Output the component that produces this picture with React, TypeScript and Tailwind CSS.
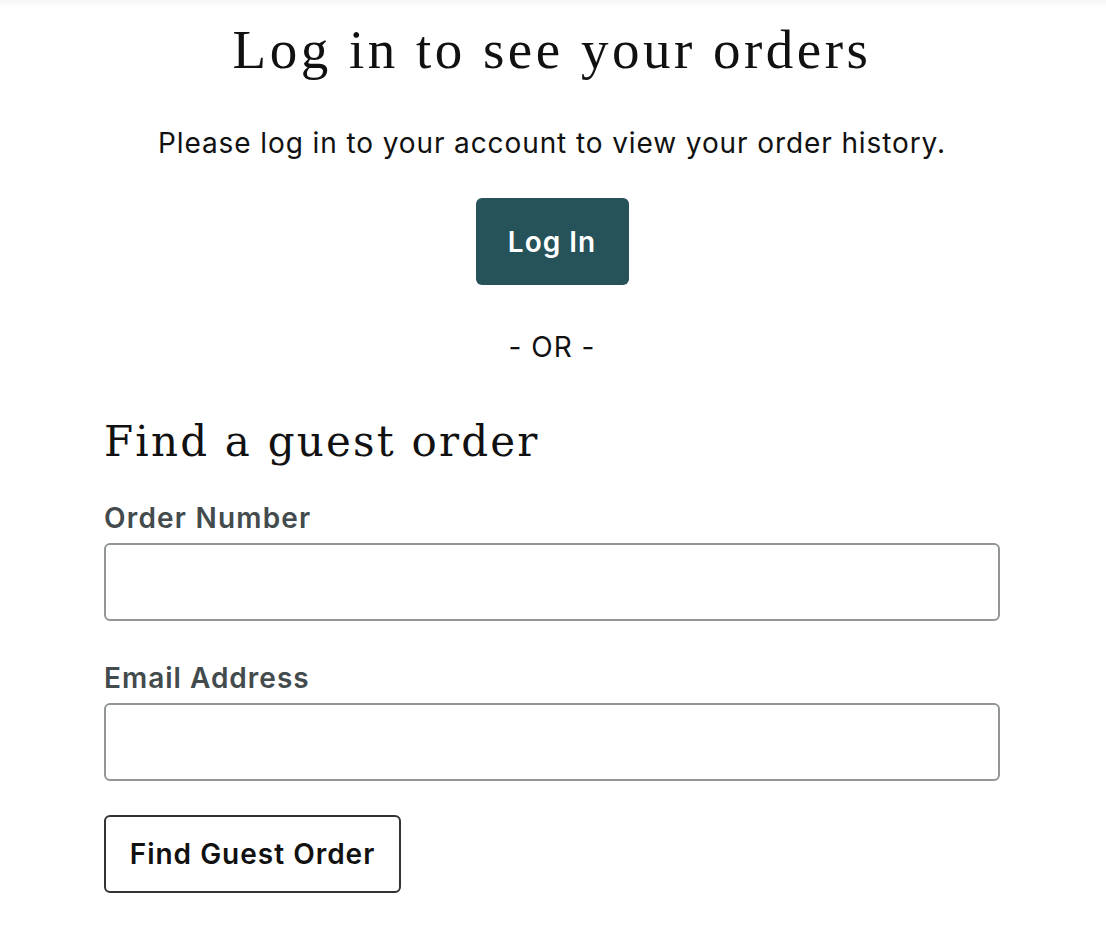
import React from "react";

export default function App() {
  const sans = { fontFamily: "Inter, 'Noto Sans', sans-serif" };
  return (
    <div className="min-h-[946px] w-full bg-white relative" style={sans}>
      <div className="absolute inset-x-0 top-0 h-[8px] bg-gradient-to-b from-[#f5f5f5] to-white" />
      <div className="ml-[104px] w-[896px] pt-[20px] flex flex-col">
        <h1 className="h-[60px] text-center text-[55px] leading-[60px] text-[#111] font-['Liberation_Serif',serif] tracking-[3.5px]">
          Log in to see your orders
        </h1>
        <p className="mt-[43px] h-[40px] text-center text-[28px] leading-[40px] text-[#111] tracking-[0.9px]">
          Please log in to your account to view your order history.
        </p>
        <div className="mt-[35px] flex justify-center">
          <button className="h-[87px] w-[153px] rounded-[6px] bg-[#265259] text-white text-[28px] font-semibold tracking-[1px]">
            Log In
          </button>
        </div>
        <div className="mt-[42px] h-[40px] text-center text-[28px] leading-[40px] text-[#111] tracking-[1px]">- OR -</div>
        <h2 className="mt-[47px] h-[56px] text-[42px] leading-[56px] text-[#111] font-['DejaVu_Serif',serif] tracking-[2.2px]">
          Find a guest order
        </h2>
        <label className="mt-[30px] h-[36px] text-[28px] leading-[36px] font-semibold text-[#434b4d] tracking-[1.2px]">Order Number</label>
        <input className="mt-[7px] h-[78px] w-full rounded-[6px] border-2 border-[#929698] bg-white" />
        <label className="mt-[39px] h-[36px] text-[28px] leading-[36px] font-semibold text-[#434b4d] tracking-[1px]">Email Address</label>
        <input className="mt-[7px] h-[78px] w-full rounded-[6px] border-2 border-[#929698] bg-white" />
        <div className="mt-[34px]">
          <button className="h-[78px] w-[297px] rounded-[6px] border-2 border-[#333] bg-white text-[28px] font-semibold text-[#111] tracking-[1px]">
            Find Guest Order
          </button>
        </div>
      </div>
    </div>
  );
}
